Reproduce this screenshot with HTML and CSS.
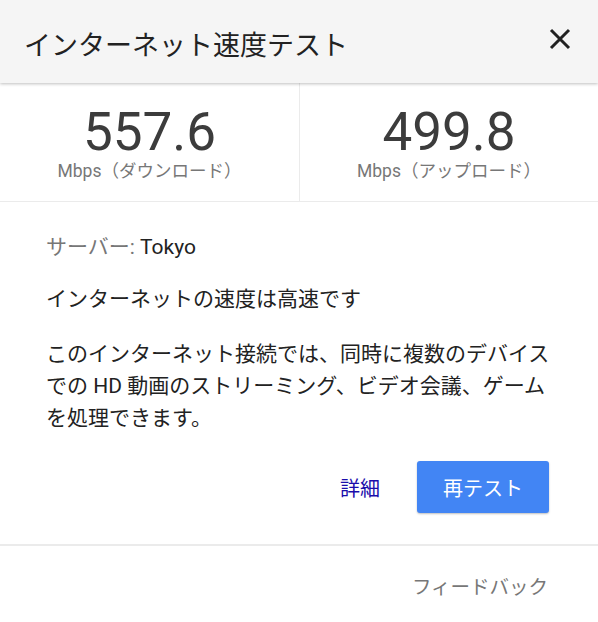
FILE: index.html
```html
<!DOCTYPE html>
<html lang="ja">
<head>
  <meta charset="UTF-8">
  <meta name="viewport" content="width=device-width, initial-scale=1.0">
  <title>インターネット速度テスト</title>
  <link rel="stylesheet" href="styles.css">
</head>
<body>
  <div class="dialog">
    <div class="header">
      <h1 class="title">インターネット速度テスト</h1>
      <button class="close" aria-label="閉じる">
        <svg width="22" height="22" viewBox="0 0 22 22">
          <path d="M2 2 L20 20 M20 2 L2 20" stroke="#222" stroke-width="3" fill="none"/>
        </svg>
      </button>
    </div>

    <div class="speeds">
      <div class="speed">
        <div class="value">557.6</div>
        <div class="unit">Mbps（ダウンロード）</div>
      </div>
      <div class="speed">
        <div class="value">499.8</div>
        <div class="unit">Mbps（アップロード）</div>
      </div>
    </div>

    <div class="content">
      <p class="server"><span class="muted">サーバー:</span> Tokyo</p>
      <p class="status">インターネットの速度は高速です</p>
      <p class="desc">このインターネット接続では、同時に複数のデバイス<br>での HD 動画のストリーミング、ビデオ会議、ゲーム<br>を処理できます。</p>

      <div class="actions">
        <a class="link" href="#">詳細</a>
        <button class="btn">再テスト</button>
      </div>
    </div>

    <div class="footer">
      <a class="feedback" href="#">フィードバック</a>
    </div>
  </div>
</body>
</html>
```

FILE: styles.css
```css
* { box-sizing: border-box; }
body {
  margin: 0;
  background: #fff;
  font-family: Roboto, "Noto Sans CJK JP", sans-serif;
  color: #222;
}
.dialog {
  width: 598px;
  height: 622px;
  background: #fff;
  overflow: hidden;
}
.header {
  height: 83px;
  background: #f5f5f5;
  display: flex;
  align-items: center;
  justify-content: space-between;
  padding: 0 27px 0 24px;
  box-shadow: 0 1px 3px rgba(0,0,0,0.25);
  position: relative;
}
.title {
  margin: 0 0 -8px;
  font-size: 27px;
  font-weight: 400;
  line-height: 34px;
  color: #222;
}
.close {
  background: none;
  border: none;
  padding: 0;
  width: 22px;
  height: 22px;
  margin-top: -6px;
  cursor: pointer;
}
.close svg { display: block; }
.speeds {
  display: grid;
  grid-template-columns: 1fr 1fr;
  border-bottom: 1px solid #ebebeb;
}
.speed {
  text-align: center;
  padding: 23px 0 20px;
}
.speed + .speed { border-left: 1px solid #ebebeb; }
.value {
  font-size: 53px;
  line-height: 53px;
  color: #3c3c3c;
}
.unit {
  margin-top: 2px;
  font-size: 17.5px;
  line-height: 20px;
  color: #777;
}
.content {
  padding: 29px 49px 0 46px;
}
.content p {
  margin: 0;
  font-size: 21px;
  line-height: 32px;
  white-space: nowrap;
}
.server { margin-bottom: 20px !important; }
.status { margin-bottom: 23px !important; }
.muted { color: #777; }
.actions {
  display: flex;
  justify-content: flex-end;
  align-items: center;
  gap: 37px;
  margin-top: 27px;
  padding-bottom: 31px;
}
.link {
  color: #1a0dab;
  font-size: 20px;
  text-decoration: none;
}
.btn {
  width: 132px;
  height: 52px;
  background: #4285f4;
  color: #fff;
  border: none;
  border-radius: 3px;
  font-family: Roboto, "Noto Sans CJK JP", sans-serif;
  font-size: 20px;
  box-shadow: 0 1px 2px rgba(0,0,0,0.25);
  cursor: pointer;
}
.footer {
  border-top: 2px solid #ebebeb;
  text-align: right;
  padding: 26px 50px 0 0;
}
.feedback {
  color: #777;
  font-size: 19.5px;
  line-height: 32px;
  text-decoration: none;
}
```
